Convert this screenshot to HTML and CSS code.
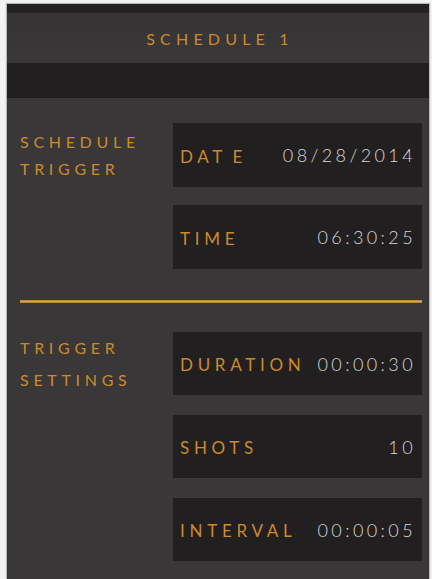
FILE: index.html
```html
<!DOCTYPE html>
<html lang="en">
<head>
<meta charset="utf-8">
<title>Schedule 1</title>
<link rel="stylesheet" href="styles.css">
</head>
<body>
<div class="panel">
  <div class="topbar"></div>
  <header class="title">SCHEDULE 1</header>
  <div class="band"></div>

  <section class="group group-schedule">
    <div class="group-label">SCHEDULE<br>TRIGGER</div>
    <div class="fields">
      <div class="field"><span class="field-label">DAT E</span><span class="field-value">08/28/2014</span></div>
      <div class="field"><span class="field-label">TIME</span><span class="field-value">06:30:25</span></div>
    </div>
  </section>

  <div class="divider"></div>

  <section class="group group-trigger">
    <div class="group-label">TRIGGER<br>SETTINGS</div>
    <div class="fields">
      <div class="field"><span class="field-label">DURATION</span><span class="field-value">00:00:30</span></div>
      <div class="field"><span class="field-label">SHOTS</span><span class="field-value">10</span></div>
      <div class="field"><span class="field-label">INTERVAL</span><span class="field-value">00:00:05</span></div>
    </div>
  </section>
</div>
</body>
</html>
```
FILE: styles.css
```css
html, body {
  margin: 0;
  padding: 0;
  height: 579px;
  overflow: hidden;
  background: #f3f3f3;
}

body {
  padding: 4px 3px 0 7px;
  box-sizing: border-box;
  font-family: Lato, "Open Sans", sans-serif;
}

.panel {
  width: 422px;
  height: 575px;
  background: #393738;
  box-shadow: 0 0 1px 1px #b8b8b8;
}

.topbar {
  height: 9px;
  background: #232122;
}

.title {
  height: 50px;
  display: flex;
  align-items: center;
  justify-content: center;
  padding-left: 4px;
  background: linear-gradient(#353334, #3a3839);
  color: #cc8a2a;
  font-size: 16px;
  letter-spacing: 5.2px;
}

.band {
  height: 35px;
  background: #211f20;
}

.group {
  display: grid;
  grid-template-columns: 166px 1fr;
  padding-right: 7px;
}

.group-schedule {
  padding-top: 25px;
}

.group-trigger {
  padding-top: 29px;
}

.group-label {
  padding-left: 13px;
  color: #cc8a2a;
  font-size: 16px;
  letter-spacing: 4.7px;
}

.group-schedule .group-label {
  padding-top: 5px;
  line-height: 27px;
}

.group-trigger .group-label {
  padding-top: 0;
  line-height: 32px;
}

.fields {
  display: flex;
  flex-direction: column;
}

.group-schedule .fields {
  gap: 18px;
}

.group-trigger .fields {
  gap: 20px;
}

.field {
  display: flex;
  align-items: center;
  justify-content: space-between;
  padding: 0 6px 0 7px;
  background: #221f20;
}

.group-schedule .field {
  height: 64px;
}

.group-trigger .field {
  height: 63px;
}

.field-label {
  color: #cc8a2a;
  font-size: 17px;
  letter-spacing: 4.7px;
  word-spacing: -3px;
  padding-top: 2px;
}

.field-value {
  color: #d8d8d8;
  font-size: 18px;
  font-weight: 300;
  letter-spacing: 3.4px;
}

.divider {
  height: 3px;
  margin: 31px 7px 0 13px;
  background: linear-gradient(#b07a2c, #d9a24f 50%, #b07a2c);
}
```
